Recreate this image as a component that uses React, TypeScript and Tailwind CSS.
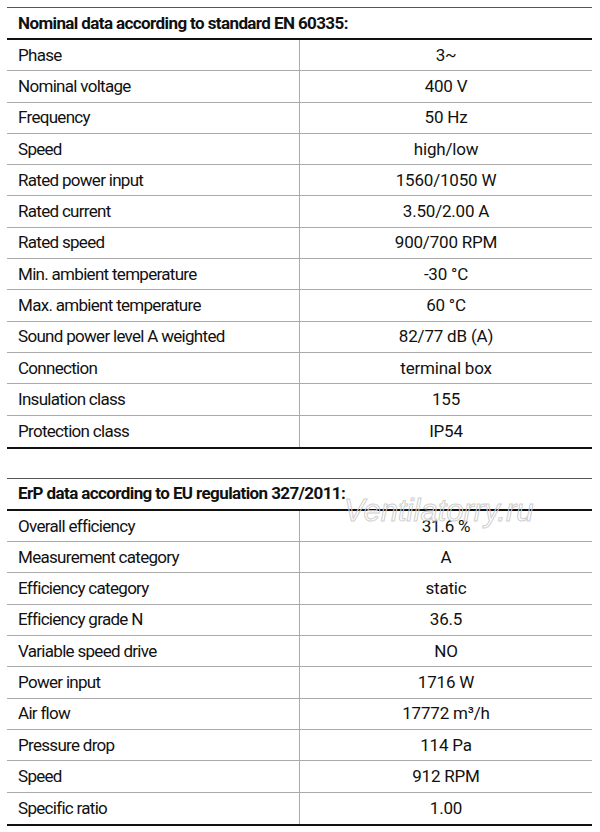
const nominal: [string, string][] = [
  ['Phase', '3~'],
  ['Nominal voltage', '400 V'],
  ['Frequency', '50 Hz'],
  ['Speed', 'high/low'],
  ['Rated power input', '1560/1050 W'],
  ['Rated current', '3.50/2.00 A'],
  ['Rated speed', '900/700 RPM'],
  ['Min. ambient temperature', '-30 °C'],
  ['Max. ambient temperature', '60 °C'],
  ['Sound power level A weighted', '82/77 dB (A)'],
  ['Connection', 'terminal box'],
  ['Insulation class', '155'],
  ['Protection class', 'IP54'],
];

const erp: [string, string][] = [
  ['Overall efficiency', '31.6 %'],
  ['Measurement category', 'A'],
  ['Efficiency category', 'static'],
  ['Efficiency grade N', '36.5'],
  ['Variable speed drive', 'NO'],
  ['Power input', '1716 W'],
  ['Air flow', '17772 m³/h'],
  ['Pressure drop', '114 Pa'],
  ['Speed', '912 RPM'],
  ['Specific ratio', '1.00'],
];

const DataTable = ({ title, rows }: { title: string; rows: [string, string][] }) => {
  return (
    <div className="border-t border-[#555] border-b-2 border-b-[#111]">
      <div className="h-[32px] flex items-center px-[11px] font-bold tracking-[-0.6px] border-b-2 border-[#111]">
        {title}
      </div>
      {rows.map(([label, value], i) => (
        <div
          key={label + i}
          className={
            'grid grid-cols-[293px_1fr] h-[31.3px] ' +
            (i < rows.length - 1 ? 'border-b border-[#aaa]' : '')
          }
        >
          <div className="flex items-center px-[11px] border-r border-[#aaa] tracking-[-0.7px]">{label}</div>
          <div className="flex items-center justify-center tracking-[-0.2px]">{value}</div>
        </div>
      ))}
    </div>
  );
}

export default function App() {
  return (
    <div className="relative w-[600px] h-[832px] bg-white text-[#111] text-[17px] pt-[7px] px-[7px] leading-none font-['Roboto',sans-serif]">
      <div className="w-[585px] flex flex-col gap-[29px]">
        <DataTable title="Nominal data according to standard EN 60335:" rows={nominal} />
        <DataTable title="ErP data according to EU regulation 327/2011:" rows={erp} />
      </div>
      <div className="absolute left-[344px] top-[495px] text-[31px] italic text-transparent [-webkit-text-stroke:1px_#cfcfcf] pointer-events-none font-['Liberation_Sans',sans-serif]">
        Ventilatorry.ru
      </div>
    </div>
  );
}
